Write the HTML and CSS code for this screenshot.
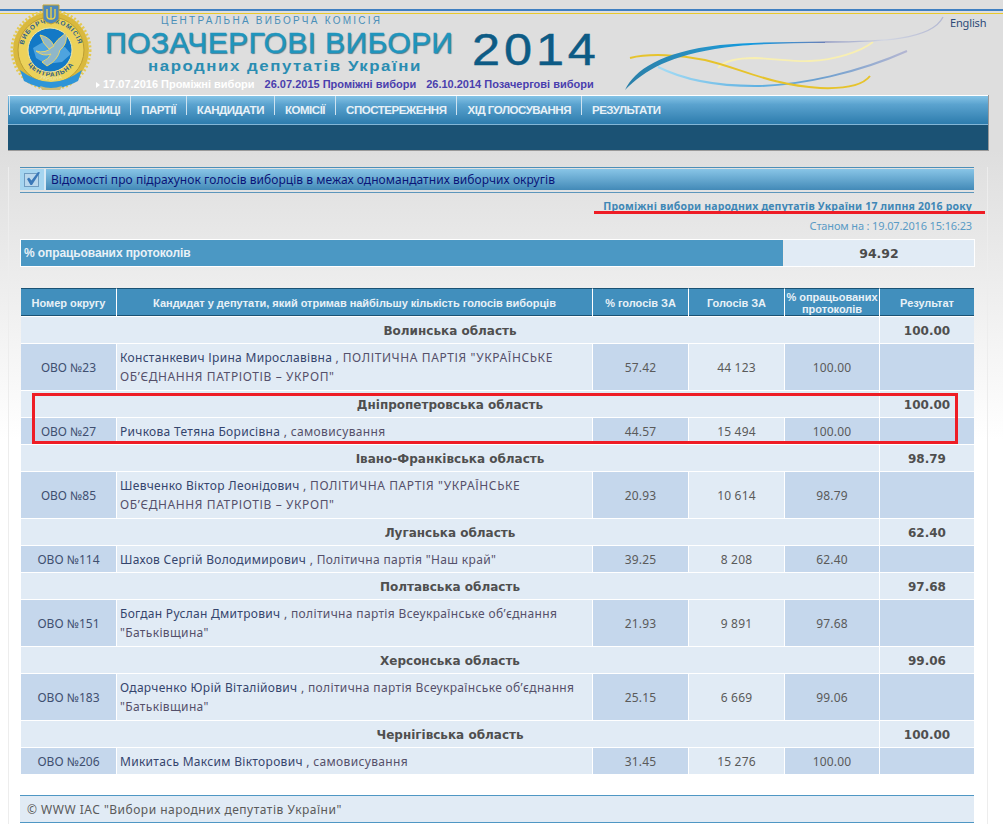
FILE: index.html
```html
<!DOCTYPE html>
<html lang="uk">
<head>
<meta charset="utf-8">
<title>Позачергові вибори народних депутатів України 2014</title>
<link rel="stylesheet" href="styles.css">
</head>
<body>
<div class="page">
  <div class="rule"></div>
  <header class="masthead">
    <svg class="emblem" width="82" height="86" viewBox="0 0 82 86" aria-hidden="true">
      <defs>
        <path id="arc-top" d="M13 47 A28 28 0 0 1 69 47"/>
        <path id="arc-bottom" d="M15 54 A27.500 27.500 0 0 0 67 54"/>
        <path id="arc-ribbon" d="M22 70 Q41 83 60 70"/>
      </defs>
      <circle cx="41" cy="46" r="38" fill="#d9b93e"/>
      <circle cx="41" cy="46" r="39" fill="none" stroke="#e4c951" stroke-width="3" stroke-dasharray="2 2"/>
      <circle cx="41" cy="46" r="33" fill="#ecd25a" stroke="#bd9f34"/>
      <text class="ring-text"><textPath href="#arc-top" startOffset="50%" text-anchor="middle">ВИБОРЧА КОМІСІЯ</textPath></text>
      <text class="ring-text"><textPath href="#arc-bottom" startOffset="50%" text-anchor="middle">ЦЕНТРАЛЬНА</textPath></text>
      <circle cx="40" cy="46" r="22" fill="#1379c6" stroke="#f3e8a6"/>
      <path d="M23 44 L33 38 L42 45 L55 43 L61 50 L52 58 L36 60 L26 54Z" fill="#4ea4df"/>
      <path d="M26 47 Q36 50 42 43 Q47 35 56 29 Q58 40 50 46 Q48 56 37 62 L32 58 Q39 55 41 50 Q33 53 26 47Z" fill="#8fb7c9" stroke="#e9d46a" stroke-width="1"/>
      <path d="M30 31 Q40 33 44 42 L39 45 Q33 40 30 31Z" fill="#8fb7c9" stroke="#e9d46a" stroke-width="1"/>
      <path d="M10 66 Q41 90 72 66 L68 77 Q41 92 14 77Z" fill="#2f95d8"/>
      <path d="M30 82 Q41 86 52 82 L50 86 H32Z" fill="#cdbb76"/>
      <text class="ribbon-text"><textPath href="#arc-ribbon" startOffset="50%" text-anchor="middle">УКРАЇНА</textPath></text>
      <path d="M33 1 H49 V15 Q46 19 41 20 Q36 19 33 15Z" fill="#4d88bc" stroke="#c9a52c"/>
      <path d="M41 3V15M37 5V12Q37 15 41 15Q45 15 45 12V5" stroke="#f0d548" stroke-width="1.300" fill="none"/>
    </svg>
    <div class="brand">
      <div class="brand-top">
        <div class="titles">
          <div class="commission">ЦЕНТРАЛЬНА ВИБОРЧА КОМІСІЯ</div>
          <div class="headline">ПОЗАЧЕРГОВІ ВИБОРИ</div>
          <div class="subline">народних депутатів України</div>
        </div>
        <div class="year">2014</div>
      </div>
      <div class="dates">
        <a class="date current">17.07.2016 Проміжні вибори</a>
        <a class="date">26.07.2015 Проміжні вибори</a>
        <a class="date">26.10.2014 Позачергові вибори</a>
      </div>
    </div>
    <svg class="swoosh" width="330" height="85" viewBox="0 0 330 85" aria-hidden="true">
      <defs>
        <linearGradient id="sw-main" x1="0" x2="1" y1="0" y2="0">
          <stop offset="0" stop-color="#2a7fa8"/>
          <stop offset=".4" stop-color="#2792c6"/>
          <stop offset=".62" stop-color="#109ae0"/>
          <stop offset="1" stop-color="#6a80b8"/>
        </linearGradient>
        <linearGradient id="sw-tail" x1="0" x2="1" y1="0" y2="0">
          <stop offset="0" stop-color="#8e97c2"/>
          <stop offset=".5" stop-color="#d2d6e2"/>
          <stop offset="1" stop-color="#b3b8d2"/>
        </linearGradient>
        <linearGradient id="sw-light" x1="0" x2="1" y1="0" y2="0">
          <stop offset="0" stop-color="#a4dcf5"/>
          <stop offset=".4" stop-color="#5fb1e2"/>
          <stop offset=".65" stop-color="#6d9fcf"/>
          <stop offset="1" stop-color="#b4b6d2"/>
        </linearGradient>
      </defs>
      <path d="M98 58 C105 50 120 48 135 48 C160 49 175 52 190 51 C215 50 240 42 253 32" fill="none" stroke="#f8efb2" stroke-width="1.800"/>
      <path d="M38 57 C60 68 90 76 135 76 C180 76 240 62 287 41" fill="none" stroke="url(#sw-light)" stroke-width="2"/>
      <path d="M10 48 C30 43 60 45 85 50 C120 58 150 75 200 78 C225 79 243 75 250 66" fill="none" stroke="#e6c32c" stroke-width="2"/>
      <path d="M5 80 C15 60 40 42 100 35 C130 32 170 32 205 31.500 L205 33 C170 33 130 34 105 37.500 C50 45 25 60 5 80Z" fill="url(#sw-main)"/>
      <path d="M205 32 C260 32 312 30 323 7" fill="none" stroke="url(#sw-tail)" stroke-width="1.300"/>
    </svg>
    <a class="lang">English</a>
  </header>

  <nav class="nav">
    <ul class="menu">
      <li>ОКРУГИ, ДІЛЬНИЦІ</li>
      <li>ПАРТІЇ</li>
      <li>КАНДИДАТИ</li>
      <li>КОМІСІЇ</li>
      <li>СПОСТЕРЕЖЕННЯ</li>
      <li>ХІД ГОЛОСУВАННЯ</li>
      <li>РЕЗУЛЬТАТИ</li>
    </ul>
    <div class="subnav"></div>
  </nav>

  <main class="content">
    <div class="title-bar">
      <span class="title-icon">
        <svg width="18" height="17" viewBox="0 0 18 17" aria-hidden="true">
          <rect x="1.500" y="2.500" width="14" height="13" fill="#b9d7ec" stroke="#6f9cc0"/>
          <path d="M4 8 L6 6.500 L8.500 9.500 L15 1 L17 1.500 L9 14 L7.500 14Z" fill="#3a78b8"/>
        </svg>
      </span>
      <h1 class="title-text">Відомості про підрахунок голосів виборців в межах одномандатних виборчих округів</h1>
    </div>
    <div class="election">Проміжні вибори народних депутатів України 17 липня 2016 року</div>
    <div class="stamp">Станом на : 19.07.2016 15:16:23</div>

    <div class="progress">
      <div class="progress-label">% опрацьованих протоколів</div>
      <div class="progress-value">94.92</div>
    </div>

    <table class="results">
      <colgroup>
        <col class="c1"><col class="c2"><col class="c3"><col class="c4"><col class="c5"><col class="c6">
      </colgroup>
      <thead>
        <tr>
          <th>Номер округу</th>
          <th>Кандидат у депутати, який отримав найбільшу кількість голосів виборців</th>
          <th>% голосів ЗА</th>
          <th>Голосів ЗА</th>
          <th>% опрацьованих протоколів</th>
          <th>Результат</th>
        </tr>
      </thead>
      <tbody>
        <tr class="region"><td colspan="5">Волинська область</td><td>100.00</td></tr>
        <tr class="row tall">
          <td class="okrug">ОВО №23</td>
          <td class="who"><span class="name">Констанкевич Ірина Мирославівна</span> , <span class="caps">ПОЛІТИЧНА ПАРТІЯ "УКРАЇНСЬКЕ ОБ’ЄДНАННЯ ПАТРІОТІВ – УКРОП"</span></td>
          <td class="num">57.42</td><td class="num light">44 123</td><td class="num">100.00</td><td class="num"></td>
        </tr>
        <tr class="region"><td colspan="5">Дніпропетровська область</td><td>100.00</td></tr>
        <tr class="row">
          <td class="okrug">ОВО №27</td>
          <td class="who"><span class="name">Ричкова Тетяна Борисівна</span> , самовисування</td>
          <td class="num">44.57</td><td class="num light">15 494</td><td class="num">100.00</td><td class="num"></td>
        </tr>
        <tr class="region"><td colspan="5">Івано-Франківська область</td><td>98.79</td></tr>
        <tr class="row tall">
          <td class="okrug">ОВО №85</td>
          <td class="who"><span class="name">Шевченко Віктор Леонідович</span> , <span class="caps">ПОЛІТИЧНА ПАРТІЯ "УКРАЇНСЬКЕ ОБ’ЄДНАННЯ ПАТРІОТІВ – УКРОП"</span></td>
          <td class="num">20.93</td><td class="num light">10 614</td><td class="num">98.79</td><td class="num"></td>
        </tr>
        <tr class="region"><td colspan="5">Луганська область</td><td>62.40</td></tr>
        <tr class="row">
          <td class="okrug">ОВО №114</td>
          <td class="who"><span class="name">Шахов Сергій Володимирович</span> , Політична партія "Наш край"</td>
          <td class="num">39.25</td><td class="num light">8 208</td><td class="num">62.40</td><td class="num"></td>
        </tr>
        <tr class="region"><td colspan="5">Полтавська область</td><td>97.68</td></tr>
        <tr class="row tall">
          <td class="okrug">ОВО №151</td>
          <td class="who"><span class="name">Богдан Руслан Дмитрович</span> , політична партія Всеукраїнське об’єднання "Батьківщина"</td>
          <td class="num">21.93</td><td class="num light">9 891</td><td class="num">97.68</td><td class="num"></td>
        </tr>
        <tr class="region"><td colspan="5">Херсонська область</td><td>99.06</td></tr>
        <tr class="row tall">
          <td class="okrug">ОВО №183</td>
          <td class="who"><span class="name">Одарченко Юрій Віталійович</span> , політична партія Всеукраїнське об’єднання "Батьківщина"</td>
          <td class="num">25.15</td><td class="num light">6 669</td><td class="num">99.06</td><td class="num"></td>
        </tr>
        <tr class="region"><td colspan="5">Чернігівська область</td><td>100.00</td></tr>
        <tr class="row">
          <td class="okrug">ОВО №206</td>
          <td class="who"><span class="name">Микитась Максим Вікторович</span> , самовисування</td>
          <td class="num">31.45</td><td class="num light">15 276</td><td class="num">100.00</td><td class="num"></td>
        </tr>
      </tbody>
    </table>

    <footer class="foot">© WWW IAC "Вибори народних депутатів України"</footer>
  </main>

  <div class="mark-line"></div>
  <div class="mark-box"></div>
</div>
</body>
</html>
```
FILE: styles.css
```css
* { box-sizing: border-box; }
html, body { margin: 0; padding: 0; }
body {
  background: linear-gradient(180deg, #dedede 0, #dedede 150px, #ffffff 440px);
  background-repeat: no-repeat;
  background-color: #fff;
  font-family: "Noto Sans", "DejaVu Sans", sans-serif;
  font-size: 12px;
  color: #4b4b4b;
}
.page { position: relative; width: 1003px; height: 836px; overflow: hidden; padding-top: 9px; }

/* masthead */
.rule { height: 5px; border-top: 2px solid #3f7fc1; border-bottom: 1px solid #e8c92a; }
.masthead { display: flex; position: relative; height: 81px; padding-left: 10px; }
.emblem { flex: none; margin-top: -10px; }
.ring-text { font: bold 6.500px "Liberation Sans", sans-serif; letter-spacing: .9px; fill: #2b5f8a; }
.ribbon-text { font: bold 5.500px "Liberation Sans", sans-serif; fill: #e9e3a0; }
.brand { flex: none; width: 500px; margin-left: 4px; display: flex; flex-direction: column; }
.brand-top { display: flex; height: 63px; }
.titles { flex: none; width: 376px; padding-top: 1px; }
.commission {
  padding-left: 65px;
  font: 10px/12px "Liberation Sans", sans-serif;
  letter-spacing: 2.25px;
  color: #4a8fb8;
  white-space: nowrap;
}
.headline {
  margin-top: -2px;
  padding-left: 9px;
  font: 30px/36px "Liberation Sans", sans-serif;
  letter-spacing: .4px;
  color: #1f95bd;
  text-shadow: 1px 1px 1px #5a7f92;
  -webkit-text-stroke: .4px #1f95bd;
  white-space: nowrap;
}
.subline {
  margin: -4px 0 0 52px;
  font: bold 15px/17px "Liberation Sans", sans-serif;
  letter-spacing: 1.4px;
  color: #2a8db2;
  white-space: nowrap;
  transform: scaleX(1.12);
  transform-origin: left center;
}
.year {
  margin-top: 13px;
  font: 45px/46px "Liberation Sans", sans-serif;
  letter-spacing: 3.5px;
  color: #0d5b85;
  -webkit-text-stroke: .5px #0d5b85;
  transform: scaleX(1.12);
  transform-origin: left center;
}
.dates { display: flex; gap: 10px; white-space: nowrap; }
.date { font: bold 11px/14px "Liberation Sans", sans-serif; color: #4a3fae; }
.date.current { color: #fff; }
.date.current::before {
  content: "";
  display: inline-block;
  border-left: 4px solid #fff;
  border-top: 3px solid transparent;
  border-bottom: 3px solid transparent;
  margin-right: 3px;
}
.swoosh { position: absolute; left: 620px; top: -4px; }
.lang { position: absolute; left: 950px; top: 1px; font: 11px/16px "Noto Sans", sans-serif; letter-spacing: -.15px; color: #2c4a78; }

/* nav */
.nav { margin-left: 8px; width: 981px; border-right: 1px solid #999; border-bottom: 1px solid #999; }
.menu {
  display: flex;
  list-style: none;
  margin: 0;
  padding: 0 0 0 1px;
  height: 30px;
  background: linear-gradient(180deg, #84c3e6 0, #5ba3cf 30%, #2d7cad 100%);
  border-top: 1px solid #fff;
  border-bottom: 1px solid #83b6d6;
}
.menu li {
  height: 19px;
  padding: 5px 10px 0;
  font: bold 11.500px/18px "Liberation Sans", sans-serif;
  letter-spacing: -.47px;
  color: #e8f1f7;
  border-left: 1px solid #cfe3f0;
  white-space: nowrap;
}
.subnav { height: 25px; background: #1b5274; }

/* content */
.content {
  margin: 16px 0 0 8px;
  width: 980px;
  padding: 0 13px 0 11px;
  border-left: 1px solid #ededed;
  border-right: 1px solid #ededed;
  height: 657px;
}
.title-bar {
  display: flex;
  align-items: stretch;
  height: 26px;
  border-top: 1px solid #4d8fb8;
  border-bottom: 1px solid #5d96bb;
  padding: 1px 0 2px;
  background-clip: content-box;
  background-image: linear-gradient(180deg, #8cc8e9, #3c84b3);
}
.title-icon {
  flex: none;
  width: 26px;
  background: #a5d5f0;
  border-right: 2px solid #d5e8f5;
  display: flex;
  align-items: center;
  justify-content: center;
}
.title-text {
  margin: 0;
  padding-left: 5px;
  font: 12px/21px "Noto Sans", sans-serif;
  letter-spacing: .05px;
  color: #0a1578;
  white-space: nowrap;
}
.election {
  margin-top: 6px;
  padding-right: 2px;
  text-align: right;
  font: bold 10.500px/15px "Noto Sans", sans-serif;
  letter-spacing: .18px;
  color: #3f87b6;
  white-space: nowrap;
}
.stamp {
  margin-top: 4px;
  padding-right: 2px;
  text-align: right;
  font-size: 11px;
  line-height: 15px;
  letter-spacing: -.15px;
  color: #5a9bc5;
}
.progress { display: flex; height: 28px; margin: 6px 0 0; width: 955px; border: 1px solid #fff; }
.progress-label {
  width: 762px;
  background: #4b98c4;
  color: #e8f1f7;
  font: bold 12px/26px "Liberation Sans", sans-serif;
  letter-spacing: -.1px;
  padding-left: 3px;
}
.progress-value {
  flex: 1;
  margin-left: 1px;
  padding-top: 1px;
  background: #e1ebf5;
  text-align: center;
  font: bold 12.500px/26px "DejaVu Sans", sans-serif;
  color: #4b4b4b;
}

/* results table */
.results {
  margin: 21px 0 0 1px;
  width: 953px;
  table-layout: fixed;
  border-collapse: separate;
  border-spacing: 0;
}
.c1 { width: 96px; } .c2 { width: 476px; } .c3 { width: 96px; } .c4 { width: 96px; } .c5 { width: 95px; } .c6 { width: 94px; }
.results th {
  height: 29px;
  padding: 0 1px;
  background: #418fbd;
  border-top: 1px solid #1b5274;
  border-bottom: 1px solid #fff;
  box-shadow: inset 0 -1px 0 #1b5274;
  border-right: 1px solid #fff;
  color: #e8f1f7;
  font: bold 11px/12px "Liberation Sans", sans-serif;
  letter-spacing: -.03px;
  text-align: center;
  vertical-align: middle;
}
.results th:last-child { border-right: 0; }
.region td {
  height: 27px;
  background: #e1ebf5;
  border-bottom: 1px solid #fff;
  text-align: center;
  font: bold 12px/16px "DejaVu Sans", sans-serif;
  color: #4f4f4f;
  padding: 1px 0 0;
}
.region td:first-child { border-right: 1px solid #fff; }
.row td { border-bottom: 1px solid #fff; height: 27px; padding: 0; }
.row.tall td { height: 47px; }
.okrug { background: #c5d7ec; border-right: 1px solid #fff; text-align: center; color: #3f4f70; }
.row .who { background: #e1ebf5; border-right: 1px solid #fff; padding: 0 3px; line-height: 19px; letter-spacing: .35px; color: #55506a; }
.name { color: #35456d; letter-spacing: .3px; }
.caps { letter-spacing: .6px; }
.num { background: #c5d7ec; border-right: 1px solid #fff; text-align: center; letter-spacing: .2px; color: #5a5a5a; }
.num.light { background: #e1ebf5; }
.num:last-child { border-right: 0; }

.foot {
  margin-top: 20px;
  width: 954px;
  height: 28px;
  padding: 1px 0 0 7px;
  background: #e1ebf5;
  border-top: 1px solid #4f97c4;
  border-bottom: 1px solid #4f97c4;
  line-height: 26px;
  letter-spacing: .5px;
  color: #5a5a5a;
}

/* annotation overlays */
.mark-line { position: absolute; left: 594px; top: 211px; width: 391px; height: 3px; background: #ee1c25; }
.mark-box { position: absolute; left: 32px; top: 393px; width: 926px; height: 51px; border: 3px solid #ee1c25; }
```
